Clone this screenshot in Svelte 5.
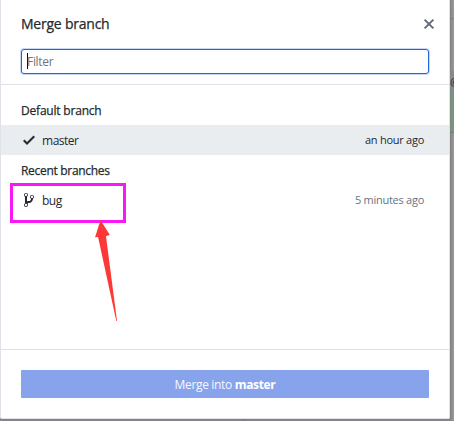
<script>
  const groups = [
    { title: 'Default branch', cls: 'default', name: 'master', time: 'an hour ago', selected: true },
    { title: 'Recent branches', cls: 'recent', name: 'bug', time: '5 minutes ago', selected: false }
  ];
</script>

<div class="screen">
  <div class="backdrop"><div class="line first"></div><div class="band"><span>@</span></div></div>
  <div class="seam"></div>
  <section class="dialog">
    <header>
      <h1><span class="t title">Merge branch</span></h1>
      <svg class="close" width="12" height="12" viewBox="0 0 12 12"><path d="M1.6 1.6 10.4 10.4M10.4 1.6 1.6 10.4" /></svg>
    </header>
    <div class="filter"><div class="input"><i></i><span class="t placeholder">Filter</span></div></div>
    <main>
      {#each groups as g}
        <h2><span class="t {g.cls}">{g.title}</span></h2>
        <div class="row" class:selected={g.selected}>
          <span class="icon">
            {#if g.selected}
              <svg width="12" height="16" viewBox="0 0 12 16"><path d="M12 5l-8 8-4-4 1.5-1.5L4 10l6.5-6.5L12 5z" /></svg>
            {:else}
              <svg width="10" height="16" viewBox="0 0 10 16"><path fill-rule="evenodd" d="M10 5c0-1.11-.89-2-2-2a1.993 1.993 0 0 0-1 3.72v.3c-.02.52-.23.98-.63 1.38-.4.4-.86.61-1.38.63-.83.02-1.48.16-2 .45V4.72a1.993 1.993 0 0 0-1-3.72C.88 1 0 1.89 0 3a2 2 0 0 0 1 1.72v6.56c-.59.35-1 .99-1 1.72 0 1.11.89 2 2 2 1.11 0 2-.89 2-2 0-.53-.2-1-.53-1.36.09-.06.48-.41.59-.47.25-.11.56-.17.94-.17 1.05-.05 1.95-.45 2.75-1.25S8.95 7.77 9 6.73h-.02C9.59 6.37 10 5.73 10 5zM2 1.8c.66 0 1.2.55 1.2 1.2 0 .65-.55 1.2-1.2 1.2C1.35 4.2.8 3.65.8 3c0-.65.55-1.2 1.2-1.2zm0 12.41c-.66 0-1.2-.55-1.2-1.2 0-.65.55-1.2 1.2-1.2.65 0 1.2.55 1.2 1.2 0 .65-.55 1.2-1.2 1.2zm6-8c-.66 0-1.2-.55-1.2-1.2 0-.65.55-1.2 1.2-1.2.65 0 1.2.55 1.2 1.2 0 .65-.55 1.2-1.2 1.2z" /></svg>
            {/if}
          </span>
          <span class="t name">{g.name}</span>
          <span class="t time">{g.time}</span>
        </div>
      {/each}
    </main>
    <footer><button><span class="t">Merge into <b>master</b></span></button></footer>
  </section>
  <div class="highlight"></div>
  <svg class="arrow" width="26" height="104" viewBox="0 0 26 104"><path d="M5.5 0 14.7 14.8 11 16.2 22 101 21.3 101 3 16.8 0 17.6Z" /></svg>
</div>

<style>
  .screen {
    position: relative;
    width: 454px;
    height: 421px;
    overflow: hidden;
    background: linear-gradient(90deg, #8c8a8c 0, #8c8a8c 449px, #848585 450px, #999b9a 454px);
    font-family: 'Open Sans', 'Noto Sans', sans-serif;
    font-size: 12px;
    color: #24292e;
  }
  .backdrop {
    position: absolute;
    left: 450px;
    top: 0;
    width: 4px;
    height: 133px;
    overflow: hidden;
  }
  .first {
    height: 18px;
    border-bottom: 1px solid #7e8182;
  }
  .band {
    margin-top: 52px;
    height: 62px;
    border-top: 1px solid #848b91;
    border-bottom: 1px solid #6f8474;
    background: linear-gradient(#848c92 0, #848c92 19px, #7c9380 21px);
    overflow: hidden;
    box-sizing: border-box;
    line-height: 20px;
    font-size: 11px;
  }
  .seam {
    position: absolute;
    left: 244px;
    top: 419px;
    width: 1px;
    height: 2px;
    background: #777678;
  }
  .dialog {
    position: relative;
    box-sizing: border-box;
    width: 450px;
    height: 419px;
    display: flex;
    flex-direction: column;
    background: #fff;
    border: 1px solid #e1e2e9;
    border-top: 0;
    border-radius: 0 0 2px 2px;
    box-shadow: 0 1px 2px #7779;
  }
  .t { white-space: nowrap; }
  header {
    height: 49px;
    display: flex;
    justify-content: space-between;
    padding: 0 14px 0 20px;
  }
  h1, h2 { margin: 0; font-weight: 400; }
  h1 { font-size: 14px; line-height: 48px; -webkit-text-stroke: 0.25px #24292e; }
  .title { letter-spacing: -0.23px; }
  .default { letter-spacing: -0.2px; }
  .recent { letter-spacing: -0.3px; }
  .close { margin-top: 18px; fill: none; stroke: #646c78; stroke-width: 2; }
  .filter {
    height: 35px;
    padding: 0 20px;
    border-bottom: 1px solid #e1e2e9;
  }
  .input {
    box-sizing: border-box;
    height: 25px;
    border: 1px solid #2463d8;
    border-radius: 3px;
    box-shadow: 0 0 0 1px #c6d7f7;
    display: flex;
    align-items: center;
    padding-left: 5px;
    color: #757575;
  }
  .input i { width: 1px; height: 16px; background: #111; margin: -1px -1px 0 0; }
  .placeholder { letter-spacing: -0.3px; }
  main { height: 264px; padding-top: 10px; box-sizing: border-box; }
  h2 {
    height: 30px;
    line-height: 32px;
    padding-left: 20px;
    font-size: 12px;
    -webkit-text-stroke: 0.25px #24292e;
  }
  .row {
    height: 30px;
    display: flex;
    align-items: center;
    padding: 0 25px 0 22px;
    box-sizing: border-box;
    color: #24292e;
  }
  .icon { width: 12px; margin-right: 7px; display: flex; justify-content: center; }
  .row svg { fill: #24292e; flex: none; }
  .row.selected { background: #e9edf0; }
  .name { letter-spacing: -0.48px; padding-top: 1px; }
  .time { margin-left: auto; padding-bottom: 1px; font-size: 11px; letter-spacing: -0.26px; color: #6a737d; }
  .selected .time { color: #24292e; }
  footer {
    border-top: 1px solid #e1e2e9;
    padding: 20px;
    display: flex;
  }
  button {
    flex: 1;
    height: 28px;
    padding: 1px 0 0;
    border: 0;
    border-radius: 1px;
    background: #87a3ec;
    color: #f5f8ff;
    font: 12px 'Open Sans', sans-serif;
    letter-spacing: -0.33px;
  }
  button b { font-weight: 700; color: #fff; }
  .highlight {
    position: absolute;
    left: 10px;
    top: 183px;
    width: 116px;
    height: 40px;
    box-sizing: border-box;
    border: 3px solid #fa19f4;
  }
  .arrow { position: absolute; left: 95px; top: 220px; fill: #fd3937; }
</style>
